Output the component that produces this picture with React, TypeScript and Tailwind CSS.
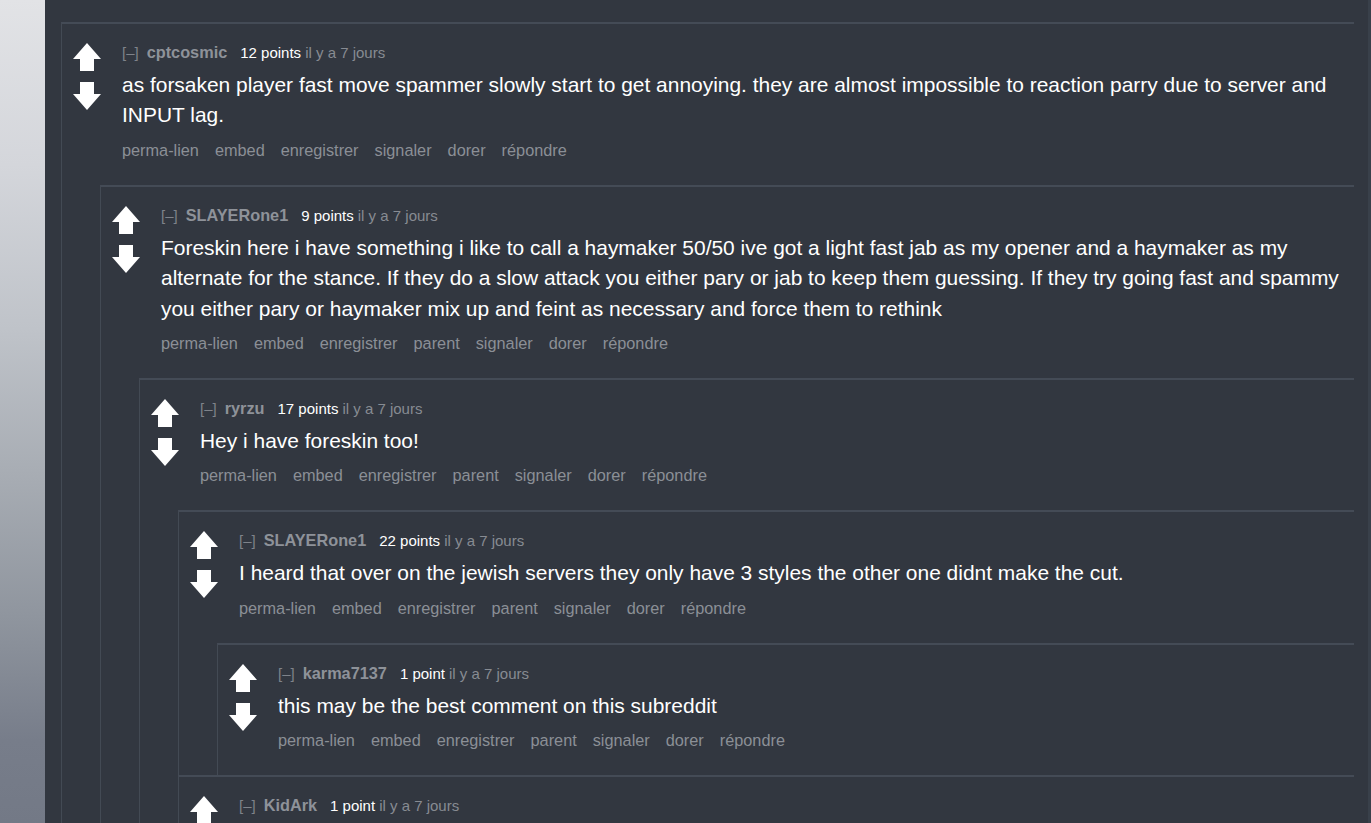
import React from "react";

type C = {
  author: string;
  points: string;
  body: string;
  parent?: boolean;
  children?: C[];
};

const data: C = {
  author: "cptcosmic",
  points: "12 points",
  body: "as forsaken player fast move spammer slowly start to get annoying. they are almost impossible to reaction parry due to server and INPUT lag.",
  children: [
    {
      author: "SLAYERone1",
      points: "9 points",
      parent: true,
      body: "Foreskin here i have something i like to call a haymaker 50/50 ive got a light fast jab as my opener and a haymaker as my alternate for the stance. If they do a slow attack you either pary or jab to keep them guessing. If they try going fast and spammy you either pary or haymaker mix up and feint as necessary and force them to rethink",
      children: [
        {
          author: "ryrzu",
          points: "17 points",
          parent: true,
          body: "Hey i have foreskin too!",
          children: [
            {
              author: "SLAYERone1",
              points: "22 points",
              parent: true,
              body: "I heard that over on the jewish servers they only have 3 styles the other one didnt make the cut.",
              children: [
                {
                  author: "karma7137",
                  points: "1 point",
                  parent: true,
                  body: "this may be the best comment on this subreddit",
                },
              ],
            },
            {
              author: "KidArk",
              points: "1 point",
              parent: true,
              body: "lol",
            },
          ],
        },
      ],
    },
  ],
};

function Up() {
  return (
    <svg width="28" height="28" viewBox="0 0 28 28" className="block">
      <polygon points="14,0 28,16 21,16 21,28 7,28 7,16 0,16" fill="#ffffff" />
    </svg>
  );
}

function Down() {
  return (
    <svg width="28" height="28" viewBox="0 0 28 28" className="block">
      <polygon points="7,0 21,0 21,12 28,12 14,28 0,12 7,12" fill="#ffffff" />
    </svg>
  );
}

function Comment({ c }: { c: C }) {
  const buttons = ["perma-lien", "embed", "enregistrer"];
  if (c.parent) buttons.push("parent");
  buttons.push("signaler", "dorer", "répondre");
  return (
    <div className="border-l border-t-2 border-l-[#434a54] border-t-[#444b56]">
      <div className="flex">
        <div className="ml-[11px] w-[28px] shrink-0 pt-[19px]">
          <Up />
          <div className="mt-[11px]">
            <Down />
          </div>
        </div>
        <div className="ml-[21px] min-w-0 flex-1 pt-[18px] pb-[25px]">
          <div className="flex items-baseline whitespace-nowrap leading-[20px]">
            <span className="text-[15px] text-[#7f838a]">[–]</span>
            <span className="ml-[8px] text-[16.3px] font-bold text-[#8e9299]">{c.author}</span>
            <span className="ml-[13px] text-[15px] text-white">{c.points}</span>
            <span className="ml-[4px] text-[15px] text-[#878b92]">il y a 7 jours</span>
          </div>
          <div className="mt-[7px] mr-[-8px] text-[20.95px] leading-[30.4px] text-white">{c.body}</div>
          <div className="mt-[9px] flex gap-[16px] whitespace-nowrap text-[16.3px] leading-[20px] text-[#8b8f96]">
            {buttons.map((b) => (
              <span key={b}>{b}</span>
            ))}
          </div>
        </div>
      </div>
      {c.children && c.children.length > 0 && (
        <div className="ml-[38px]">
          {c.children.map((ch, i) => (
            <Comment key={i} c={ch} />
          ))}
        </div>
      )}
    </div>
  );
}

export default function App() {
  return (
    <div
      className="flex h-[823px] w-full overflow-hidden bg-[#323740]"
      style={{ fontFamily: '"Liberation Sans", Arial, sans-serif' }}
    >
      <div className="w-[45px] shrink-0 bg-[linear-gradient(to_bottom,#e2e3e6_0%,#d4d6db_20%,#bfc3c9_40%,#a7acb3_58%,#8f959e_75%,#777d8a_90%,#737986_100%)]" />
      <div className="min-w-0 flex-1 pt-[22px] pl-[16px] pr-[14px]">
        <Comment c={data} />
      </div>
      <div className="w-[3px] shrink-0 bg-[#39404a]" />
    </div>
  );
}
